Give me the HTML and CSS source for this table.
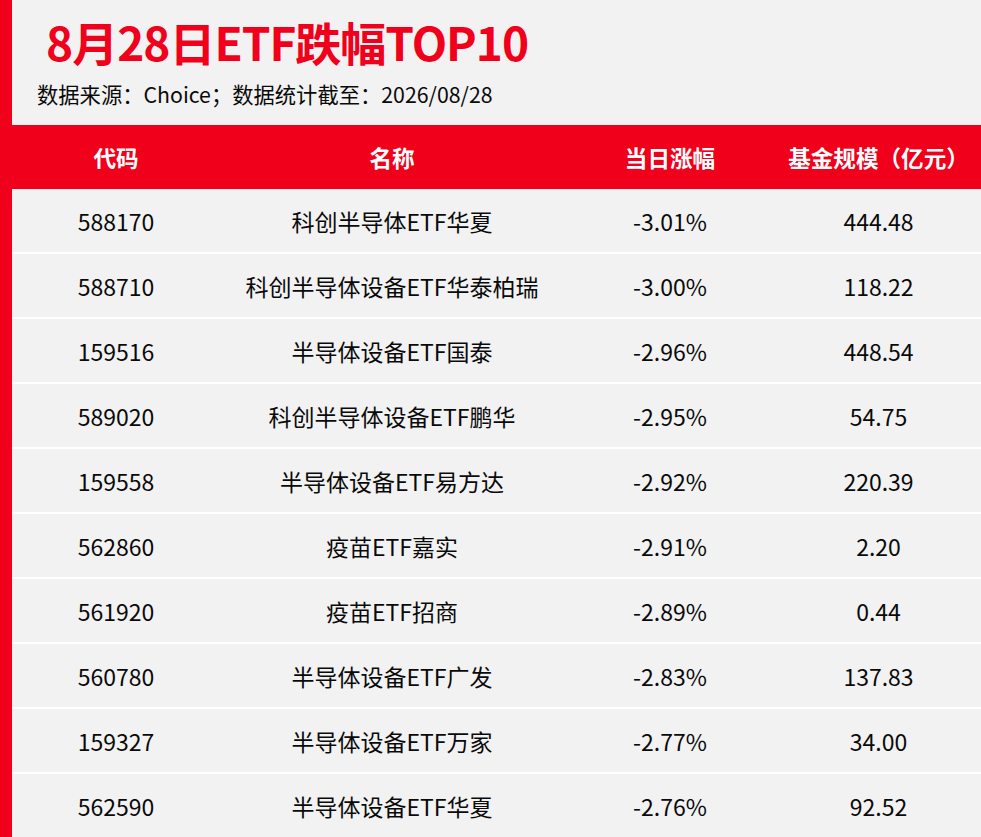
FILE: index.html
```html
<!DOCTYPE html>
<html lang="zh-CN">
<head>
<meta charset="utf-8">
<title>8月28日ETF跌幅TOP10</title>
<link rel="stylesheet" href="styles.css">
</head>
<body>
<div class="page">
  <div class="intro">
    <h1 class="title">8月28日ETF跌幅TOP10</h1>
    <p class="source">数据来源：Choice；数据统计截至：2026/08/28</p>
  </div>
  <div class="table">
    <div class="row head">
      <div class="cell">代码</div>
      <div class="cell">名称</div>
      <div class="cell">当日涨幅</div>
      <div class="cell">基金规模（亿元）</div>
    </div>
    <div class="row"><div class="cell">588170</div><div class="cell">科创半导体ETF华夏</div><div class="cell">-3.01%</div><div class="cell">444.48</div></div>
    <div class="row"><div class="cell">588710</div><div class="cell">科创半导体设备ETF华泰柏瑞</div><div class="cell">-3.00%</div><div class="cell">118.22</div></div>
    <div class="row"><div class="cell">159516</div><div class="cell">半导体设备ETF国泰</div><div class="cell">-2.96%</div><div class="cell">448.54</div></div>
    <div class="row"><div class="cell">589020</div><div class="cell">科创半导体设备ETF鹏华</div><div class="cell">-2.95%</div><div class="cell">54.75</div></div>
    <div class="row"><div class="cell">159558</div><div class="cell">半导体设备ETF易方达</div><div class="cell">-2.92%</div><div class="cell">220.39</div></div>
    <div class="row"><div class="cell">562860</div><div class="cell">疫苗ETF嘉实</div><div class="cell">-2.91%</div><div class="cell">2.20</div></div>
    <div class="row"><div class="cell">561920</div><div class="cell">疫苗ETF招商</div><div class="cell">-2.89%</div><div class="cell">0.44</div></div>
    <div class="row"><div class="cell">560780</div><div class="cell">半导体设备ETF广发</div><div class="cell">-2.83%</div><div class="cell">137.83</div></div>
    <div class="row"><div class="cell">159327</div><div class="cell">半导体设备ETF万家</div><div class="cell">-2.77%</div><div class="cell">34.00</div></div>
    <div class="row"><div class="cell">562590</div><div class="cell">半导体设备ETF华夏</div><div class="cell">-2.76%</div><div class="cell">92.52</div></div>
  </div>
</div>
</body>
</html>
```
FILE: styles.css
```css
html, body {
  margin: 0;
  padding: 0;
  background: #f2f2f2;
}
body {
  font-family: "Noto Sans CJK SC", "Noto Sans", sans-serif;
  color: #0a0a0a;
}
.page {
  border-left: 12px solid #f0001a;
  min-height: 837px;
  box-sizing: border-box;
  overflow: hidden;
}
.intro {
  padding: 18px 0 16px;
}
.title {
  margin: 0 0 15px 34px;
  font-size: 46px;
  line-height: 46px;
  font-weight: 700;
  letter-spacing: -1px;
  color: #f0001a;
}
.source {
  margin: 0 0 0 25px;
  font-size: 21.3px;
  line-height: 30px;
}
.row {
  display: grid;
  grid-template-columns: 208px 344px 212px 1fr;
  height: 63px;
  border-bottom: 2px solid #ffffff;
  font-size: 23px;
}
.cell {
  display: flex;
  align-items: center;
  justify-content: center;
  white-space: nowrap;
}
.row.head {
  height: 64px;
  border-bottom: none;
  background: #f0001a;
  color: #ffffff;
  font-size: 22.6px;
  font-weight: 700;
}
```
